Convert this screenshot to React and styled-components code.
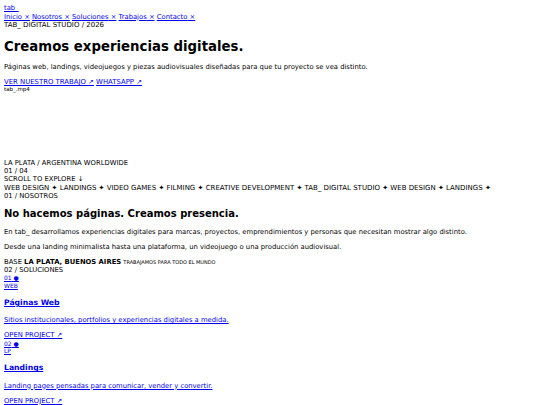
import styled, { createGlobalStyle } from "styled-components";

const GlobalStyle = createGlobalStyle`
  body {
    margin: 4px;
    font-family: "DejaVu Sans", Verdana, sans-serif;
    font-size: 6.8px;
    line-height: 8.3px;
    color: #000;
    background: #fff;
  }
  a {
    color: #0000ee;
  }
`;

const Header = styled.header`
  line-height: 8.6px;
`;

const Logo = styled.a`
  display: inline-block;
`;

const Nav = styled.nav``;

const NavLink = styled.a``;

const Tagline = styled.div`
  font-size: 7px;
  line-height: 8.6px;
`;

const Hero = styled.section``;

const Title = styled.h1`
  font-size: 13.3px;
  line-height: 16.2px;
  margin: 8.9px 0 8px;
`;

const Lead = styled.p`
  margin: 1em 0;
`;

const Actions = styled.div`
  font-size: 6.9px;
`;

const Media = styled.div`
  font-size: 5.5px;
  line-height: 6.7px;
  height: 72.5px;
`;

const MetaLine = styled.div``;

const Marquee = styled.div`
  font-size: 7px;
  white-space: nowrap;
  overflow: hidden;
`;

const SectionLabel = styled.div``;

const SectionTitle = styled.h2`
  font-size: 10px;
  line-height: 12.2px;
  margin: 7.5px 0 8.3px;
`;

const Text = styled.p`
  margin: 0.95em 0;
`;

const Base = styled.div``;

const Small = styled.span`
  font-size: 5px;
`;

const Card = styled.a`
  display: block;
`;

const CardIndex = styled.div`
  font-size: 6px;
  line-height: 7.8px;
`;

const CardTitle = styled.h3`
  font-size: 7.7px;
  line-height: 9.4px;
  margin: 1.05em 0 1.15em;
`;

const CardText = styled.p`
  margin: 1em 0;
`;

const CardCta = styled.div``;

const navItems = ["Inicio", "Nosotros", "Soluciones", "Trabajos", "Contacto"];
const ticker = [
  "WEB DESIGN",
  "LANDINGS",
  "VIDEO GAMES",
  "FILMING",
  "CREATIVE DEVELOPMENT",
  "TAB_ DIGITAL STUDIO",
  "WEB DESIGN",
  "LANDINGS",
];
const solutions = [
  {
    n: "01",
    tag: "WEB",
    title: "Páginas Web",
    text: "Sitios institucionales, portfolios y experiencias digitales a medida.",
  },
  {
    n: "02",
    tag: "LP",
    title: "Landings",
    text: "Landing pages pensadas para comunicar, vender y convertir.",
  },
  {
    n: "03",
    tag: "GAME",
    title: "Videojuegos",
    text: "Experiencias interactivas y juegos para marcas y proyectos.",
  },
];

export default function App() {
  return (
    <>
      <GlobalStyle />
      <Header>
        <Logo href="#">tab_</Logo>
        <Nav>
          {navItems.map((item, i) => (
            <span key={item}>
              <NavLink href="#">{item} ×</NavLink>
              {i < navItems.length - 1 ? " " : ""}
            </span>
          ))}
        </Nav>
      </Header>
      <Hero>
        <Tagline>TAB_ DIGITAL STUDIO / 2026</Tagline>
        <Title>Creamos experiencias digitales.</Title>
        <Lead>
          Páginas web, landings, videojuegos y piezas audiovisuales diseñadas
          para que tu proyecto se vea distinto.
        </Lead>
        <Actions>
          <a href="#">VER NUESTRO TRABAJO ↗</a> <a href="#">WHATSAPP ↗</a>
        </Actions>
        <Media>tab_.mp4</Media>
        <MetaLine>LA PLATA / ARGENTINA WORLDWIDE</MetaLine>
        <MetaLine>01 / 04</MetaLine>
        <MetaLine>SCROLL TO EXPLORE ↓</MetaLine>
      </Hero>
      <Marquee>
        {ticker.map((t, i) => (
          <span key={i}>{t} ✦ </span>
        ))}
      </Marquee>
      <section>
        <SectionLabel>01 / NOSOTROS</SectionLabel>
        <SectionTitle>No hacemos páginas. Creamos presencia.</SectionTitle>
        <Text>
          En tab_ desarrollamos experiencias digitales para marcas, proyectos,
          emprendimientos y personas que necesitan mostrar algo distinto.
        </Text>
        <Text>
          Desde una landing minimalista hasta una plataforma, un videojuego o
          una producción audiovisual.
        </Text>
        <Base>
          BASE <b>LA PLATA, BUENOS AIRES</b>{" "}
          <Small>TRABAJAMOS PARA TODO EL MUNDO</Small>
        </Base>
      </section>
      <section>
        <SectionLabel>02 / SOLUCIONES</SectionLabel>
        {solutions.map((s) => (
          <Card href="#" key={s.n}>
            <CardIndex>{s.n} ●</CardIndex>
            <CardIndex>{s.tag}</CardIndex>
            <CardTitle>{s.title}</CardTitle>
            <CardText>{s.text}</CardText>
            <CardCta>OPEN PROJECT ↗</CardCta>
          </Card>
        ))}
      </section>
    </>
  );
}
